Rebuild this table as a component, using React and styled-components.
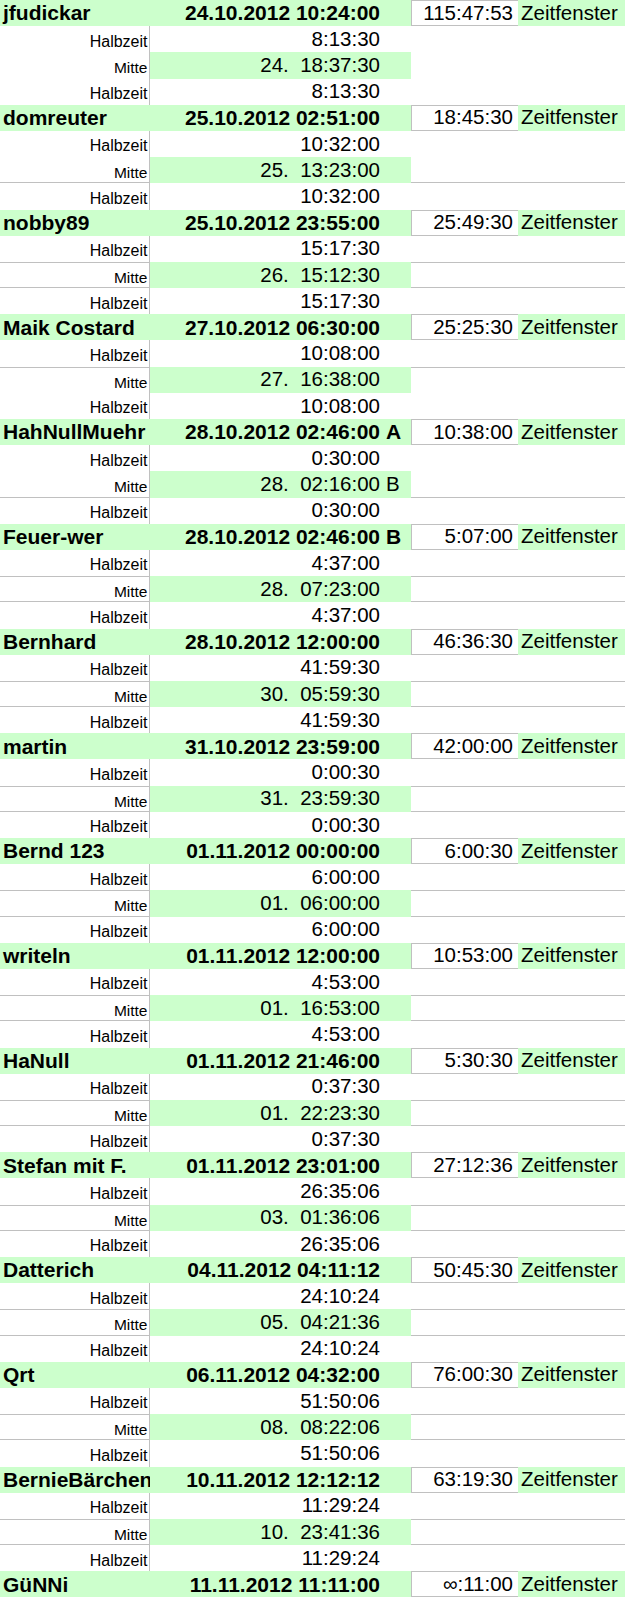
import React from 'react';
import styled, { createGlobalStyle, css } from 'styled-components';

const GREEN = '#ccffcc';
const GRID = '#c0c0c0';

const entries = [
  { name: 'jfudickar', start: '24.10.2012 10:24:00', span: '115:47:53', half: '8:13:30', mid: '24.  18:37:30', lines: 'none' },
  { name: 'domreuter', start: '25.10.2012 02:51:00', span: '18:45:30', half: '10:32:00', mid: '25.  13:23:00', lines: 'bottom' },
  { name: 'nobby89', start: '25.10.2012 23:55:00', span: '25:49:30', half: '15:17:30', mid: '26.  15:12:30', lines: 'both' },
  { name: 'Maik Costard', start: '27.10.2012 06:30:00', span: '25:25:30', half: '10:08:00', mid: '27.  16:38:00', lines: 'top' },
  { name: 'HahNullMuehr', start: '28.10.2012 02:46:00', mark: 'A', span: '10:38:00', half: '0:30:00', mid: '28.  02:16:00', midMark: 'B', lines: 'bottom' },
  { name: 'Feuer-wer', start: '28.10.2012 02:46:00', mark: 'B', span: '5:07:00', half: '4:37:00', mid: '28.  07:23:00', lines: 'both' },
  { name: 'Bernhard', start: '28.10.2012 12:00:00', span: '46:36:30', half: '41:59:30', mid: '30.  05:59:30', lines: 'both' },
  { name: 'martin', start: '31.10.2012 23:59:00', span: '42:00:00', half: '0:00:30', mid: '31.  23:59:30', lines: 'both' },
  { name: 'Bernd 123', start: '01.11.2012 00:00:00', span: '6:00:30', half: '6:00:00', mid: '01.  06:00:00', lines: 'both' },
  { name: 'writeln', start: '01.11.2012 12:00:00', span: '10:53:00', half: '4:53:00', mid: '01.  16:53:00', lines: 'both' },
  { name: 'HaNull', start: '01.11.2012 21:46:00', span: '5:30:30', half: '0:37:30', mid: '01.  22:23:30', lines: 'both' },
  { name: 'Stefan mit F.', start: '01.11.2012 23:01:00', span: '27:12:36', half: '26:35:06', mid: '03.  01:36:06', lines: 'both' },
  { name: 'Datterich', start: '04.11.2012 04:11:12', span: '50:45:30', half: '24:10:24', mid: '05.  04:21:36', lines: 'both' },
  { name: 'Qrt', start: '06.11.2012 04:32:00', span: '76:00:30', half: '51:50:06', mid: '08.  08:22:06', lines: 'both' },
  { name: 'BernieBärchen', start: '10.11.2012 12:12:12', span: '63:19:30', half: '11:29:24', mid: '10.  23:41:36', lines: 'both' },
  { name: 'GüNNi', start: '11.11.2012 11:11:00', span: '∞:11:00' },
];

const GlobalStyle = createGlobalStyle`
  html, body {
    margin: 0;
    padding: 0;
    background: #fff;
  }
  body {
    font-family: "Liberation Sans", Arial, sans-serif;
    color: #000;
  }
`;

const Sheet = styled.div`
  width: 625px;
  display: flex;
  flex-direction: column;
`;

const Row = styled.div`
  display: grid;
  grid-template-columns: 150px 232px 29px 107px 107px;
  height: 26.2px;
`;

const cellBase = css`
  display: flex;
  align-items: flex-end;
  box-sizing: border-box;
  line-height: 1;
  white-space: pre;
  min-width: 0;
`;

const NameCell = styled.div`
  ${cellBase};
  background: ${GREEN};
  font-size: 21px;
  font-weight: bold;
  padding: 0 0 2.8px 3px;
  overflow: visible;
`;

const DateCell = styled.div`
  ${cellBase};
  justify-content: flex-end;
  background: ${GREEN};
  font-size: 21px;
  font-weight: bold;
  padding: 0 2px 2.8px 0;
`;

const MarkCell = styled.div`
  ${cellBase};
  background: ${p => (p.$green ? GREEN : '#fff')};
  font-size: ${p => (p.$bold ? '21px' : '20.5px')};
  font-weight: ${p => (p.$bold ? 'bold' : 'normal')};
  padding: 0 0 2.9px 4px;
`;

const SpanCell = styled.div`
  ${cellBase};
  justify-content: flex-end;
  background: #fff;
  border: 1px solid ${GRID};
  border-right: none;
  font-size: 20.5px;
  padding: 0 5px 2px 0;
`;

const WindowCell = styled.div`
  ${cellBase};
  background: ${GREEN};
  font-size: 20.5px;
  padding: 0 0 3px 3px;
`;

const lineShadow = (top, bottom, extra) => {
  const parts = [];
  if (top) parts.push(`inset 0 1px 0 ${GRID}`);
  if (bottom) parts.push(`inset 0 -1px 0 ${GRID}`);
  if (extra) parts.push(extra);
  return parts.length ? parts.join(', ') : 'none';
};

const LabelCell = styled.div`
  ${cellBase};
  justify-content: flex-end;
  background: #fff;
  font-size: ${p => (p.$small ? '15.5px' : '16px')};
  padding: 0 2.5px 2.7px 0;
  box-shadow: ${p => lineShadow(p.$top, p.$bottom, `inset -1px 0 0 ${GRID}`)};
`;

const ValueCell = styled.div`
  ${cellBase};
  justify-content: flex-end;
  background: ${p => (p.$green ? GREEN : '#fff')};
  font-size: 20.5px;
  padding: 0 2px 3px 0;
`;

const BlankCell = styled.div`
  grid-column: span 2;
  background: #fff;
  box-shadow: ${p => lineShadow(p.$top, p.$bottom)};
`;

function HeaderRow({ entry }) {
  return (
    <Row>
      <NameCell>{entry.name}</NameCell>
      <DateCell>{entry.start}</DateCell>
      <MarkCell $green $bold>{entry.mark || ''}</MarkCell>
      <SpanCell>{entry.span}</SpanCell>
      <WindowCell>Zeitfenster</WindowCell>
    </Row>
  );
}

function SubRow({ label, value, mark, green, top, bottom }) {
  return (
    <Row>
      <LabelCell $small={label === 'Mitte'} $top={top} $bottom={bottom}>{label}</LabelCell>
      <ValueCell $green={green}>{value}</ValueCell>
      <MarkCell $green={green}>{mark || ''}</MarkCell>
      <BlankCell $top={top} $bottom={bottom} />
    </Row>
  );
}

function Block({ entry }) {
  const top = entry.lines === 'both' || entry.lines === 'top';
  const bottom = entry.lines === 'both' || entry.lines === 'bottom';
  return (
    <>
      <HeaderRow entry={entry} />
      {entry.half && (
        <>
          <SubRow label="Halbzeit" value={entry.half} />
          <SubRow label="Mitte" value={entry.mid} mark={entry.midMark} green top={top} bottom={bottom} />
          <SubRow label="Halbzeit" value={entry.half} />
        </>
      )}
    </>
  );
}

export default function App() {
  return (
    <>
      <GlobalStyle />
      <Sheet>
        {entries.map(e => (
          <Block key={e.name} entry={e} />
        ))}
      </Sheet>
    </>
  );
}
